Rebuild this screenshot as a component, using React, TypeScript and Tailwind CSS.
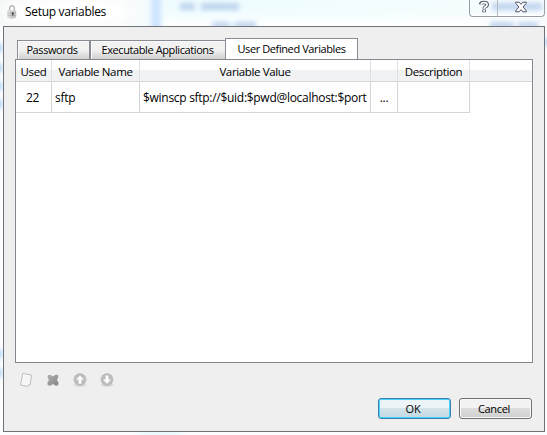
import React from "react";

const font = "font-['Open_Sans','Noto_Sans',sans-serif]";

function Glass() {
  return (
    <svg className="absolute inset-0" width="547" height="435" aria-hidden="true">
      <defs>
        <filter id="soft" x="-50%" y="-100%" width="200%" height="300%">
          <feGaussianBlur stdDeviation="2.4" />
        </filter>
        <filter id="band" x="-100%" y="-50%" width="300%" height="200%">
          <feGaussianBlur stdDeviation="2.5" />
        </filter>
        <filter id="wide" x="-50%" y="-100%" width="200%" height="300%">
          <feGaussianBlur stdDeviation="5" />
        </filter>
        <linearGradient id="sky" x1="0" y1="0" x2="1" y2="0">
          <stop offset="0" stopColor="#f6f7f8" />
          <stop offset="0.22" stopColor="#fbfcfc" />
          <stop offset="0.32" stopColor="#eefcff" />
          <stop offset="0.7" stopColor="#f2fdfe" />
          <stop offset="1" stopColor="#f8fcff" />
        </linearGradient>
      </defs>
      <rect width="547" height="435" fill="#fbfdff" />
      <rect width="547" height="26" fill="url(#sky)" />
      <g filter="url(#wide)">
        <ellipse cx="66" cy="12" rx="62" ry="14" fill="#ffffff" />
        <rect x="160" y="18" width="380" height="12" fill="#ffffff" />
        <ellipse cx="160" cy="434" rx="25" ry="2" fill="#c6f3f7" />
      </g>
      <rect x="151" y="-8" width="10" height="44" fill="#cee5ff" filter="url(#band)" />
      <g filter="url(#soft)" fill="#bdd3ee">
        <rect x="180" y="3" width="15" height="7" />
        <rect x="201" y="3" width="38" height="7" />
        <rect x="212" y="22" width="18" height="6" />
        <rect x="234" y="22" width="22" height="6" />
        <rect x="492" y="3" width="50" height="7" />
        <rect x="490" y="22" width="24" height="6" />
        <rect x="518" y="22" width="20" height="6" />
      </g>
      <g filter="url(#soft)" fill="#a6ccf5">
        <rect x="-3" y="44" width="5" height="8" />
        <rect x="-3" y="64" width="5" height="8" />
        <rect x="-3" y="82" width="5" height="8" />
        <rect x="-3" y="100" width="5" height="8" />
        <rect x="-3" y="350" width="5" height="8" />
        <rect x="-3" y="369" width="5" height="8" />
        <rect x="545" y="38" width="5" height="8" />
      </g>
    </svg>
  );
}

function LockIcon() {
  return (
    <svg width="10" height="14" viewBox="0 0 10 14">
      <path d="M2.6 6V3.7C2.6 1.6 3.4.8 4.9.8s2.4.8 2.4 2.9V6" fill="none" stroke="#b8b8b8" strokeWidth="1.5" />
      <path d="M.6 5.6h8.6v6.8c-1.7 1.4-6.9 1.4-8.6 0z" fill="#c6c6c6" />
      <path d="M.6 5.6h2.6v7.6L.6 12.2z" fill="#dedede" />
      <path d="M.6 8.2h8.6M.6 10.6h8.6" stroke="#a5a5a5" strokeWidth=".6" />
      <circle cx="5.8" cy="8.2" r="1" fill="#444" />
      <path d="M5.4 8.2h.8l.3 2.4H5.1z" fill="#444" />
    </svg>
  );
}

function TitleButtons() {
  return (
    <div className="mr-[2px] flex h-[17px] w-[76px] rounded-b-[4px] border border-t-0 border-[#979fa5] shadow-[0_1px_0_#ffffff,inset_0_-1px_0_#ffffff]">
      <div className="flex w-[28px] justify-center border-r border-[#b5bdc3]">
        <svg width="12" height="14" viewBox="0 0 12 14">
          <path d="M2.6 4.4C2.9 2 9.2 1.6 9.2 4.8 9.2 7 6.1 6.5 6.1 8.6M6.1 9.6v2.7" fill="none" stroke="#535666" strokeWidth="3.6" />
          <path d="M3 4.2C3.7 2.2 9.1 2 9.1 4.8 9.1 6.9 6.1 6.5 6.1 8.4M6.1 10.1v1.6" fill="none" stroke="#fff" strokeWidth="1.7" />
        </svg>
      </div>
      <div className="flex flex-1 justify-center pt-px">
        <svg width="12" height="12" viewBox="0 0 12 12">
          <path d="M.7 1.2h3.4L6 3.3l1.9-2.1h3.4v1L8.1 6l3.2 3.8v1H7.9L6 8.7l-1.9 2.1H.7v-1L3.9 6 .7 2.2z" fill="#fff" stroke="#535666" strokeLinejoin="round" />
        </svg>
      </div>
    </div>
  );
}

function NewIcon() {
  return (
    <svg width="14" height="16" viewBox="0 0 14 16">
      <path d="M3.7 1.4 12.6 3l-1.4 9.8-2.4 1.6L1.5 13z" fill="#f6f6f6" stroke="#b9b9b9" strokeWidth=".9" strokeLinejoin="round" />
      <path d="m8.8 14.2.4-2 2-.2z" fill="#ccc" />
    </svg>
  );
}

function DeleteIcon() {
  return (
    <svg width="12" height="12" viewBox="0 0 12 12">
      <defs>
        <linearGradient id="del" x2="1" y2="1">
          <stop stopColor="#b0b0b0" />
          <stop offset="1" stopColor="#858585" />
        </linearGradient>
      </defs>
      <path d="M1.2 1h2.6L6 2.4 8.4.8h2.3l.5.7v2L9.9 6l1.5 2.2v2.4l-.8.8H8.2L6 10.1l-2 1.3H1.3l-.8-.8V8.4L2 6 .7 3.8V1.5z" fill="url(#del)" />
    </svg>
  );
}

function ArrowIcon({ down = false }: { down?: boolean }) {
  return (
    <svg width="14" height="14" viewBox="0 0 14 14">
      <ellipse cx="7" cy="12" rx="6.5" ry="1.8" fill="#dcdcdc" />
      <circle cx="7" cy="6.6" r="6" fill="#bdbdbd" stroke="#aaa" strokeWidth=".5" />
      <path d="M7 2.4 11 6.6H8.4v4.2H5.6V6.6H3z" fill="#fff" transform={down ? "rotate(180 7 6.6)" : undefined} />
    </svg>
  );
}

const columns = [
  { label: "Used", width: "w-[36px]", value: "22", cell: "justify-center pr-[2px]" },
  { label: "Variable Name", width: "w-[88px]", value: "sftp", cell: "pl-[3px]" },
  { label: "Variable Value", width: "w-[231px]", value: "$winscp sftp://$uid:$pwd@localhost:$port", cell: "pl-[3px]" },
  { label: "", width: "w-[27px]", value: "...", cell: "justify-center" },
  { label: "Description", width: "w-[72px]", value: "", cell: "" },
];

const tab = "flex items-center justify-center border border-b-0 border-[#898c95] whitespace-nowrap tracking-[-0.4px]";

export default function App() {
  return (
    <div className={`relative h-[435px] w-[547px] overflow-hidden text-[11px] leading-[14px] tracking-[-0.2px] text-black ${font}`}>
      <Glass />
      <div className="relative flex h-full flex-col">
        <header className="flex h-[26px] shrink-0 items-start">
          <div className="flex h-6 flex-1 items-center pl-[7px]">
            <LockIcon />
            <h1 className="ml-2 text-[12px] tracking-[-0.3px]">Setup variables</h1>
          </div>
          <TitleButtons />
        </header>
        <main className="ml-[3px] flex h-[406px] w-[542px] flex-col border border-[#6f7378] bg-[#efefef] pl-[11px] pt-[11px]">
          <div className="flex h-[21px] items-end pl-[2px]">
            <div className={`${tab} h-[19px] w-[73px] bg-linear-to-b from-[#f2f2f2] from-50% to-[#d5d5d5] to-90% pr-[3px] shadow-[inset_1px_1px_0_#fafafa]`}>Passwords</div>
            <div className={`${tab} h-[19px] w-[136px] bg-linear-to-b from-[#f2f2f2] from-50% to-[#d5d5d5] to-90% pr-px shadow-[inset_1px_1px_0_#fafafa]`}>Executable Applications</div>
            <div className={`${tab} -ml-px h-[21px] w-[133px] bg-white`}>User Defined Variables</div>
          </div>
          <section className="h-[304px] w-[518px] border border-[#828790] bg-white">
            <div className="flex h-[22px] border-b border-[#d5d5d5] bg-linear-to-b from-white from-45% to-[#f1f2f4] to-50% text-[11.5px] tracking-[-0.36px]">
              {columns.map((c, i) => (
                <div key={i} className={`${c.width} flex shrink-0 items-center justify-center border-r border-[#dfe0e1] pt-[2px] whitespace-nowrap`}>{c.label}</div>
              ))}
            </div>
            <div className="flex h-[31px] text-[12px] tracking-[-0.29px]">
              {columns.map((c, i) => (
                <div key={i} className={`${c.width} ${c.cell} flex shrink-0 items-center border-r border-b border-[#d5d5d5] pt-px whitespace-nowrap`}>{c.value}</div>
              ))}
            </div>
          </section>
          <div className="flex h-[35px] items-center gap-[13px] pb-px pl-[4px]">
            <NewIcon />
            <div className="flex w-[14px] justify-center"><DeleteIcon /></div>
            <ArrowIcon />
            <ArrowIcon down />
          </div>
          <div className="flex justify-end gap-2 pr-[12px]">
            <button className="h-[21px] w-[73px] rounded-[3px] border border-[#3c7fb1] bg-linear-to-b from-[#edf4f7] from-45% via-[#d3e3ea] via-50% to-[#c0d8e3] pr-[3px] shadow-[inset_0_0_0_1px_#46d5f8]">OK</button>
            <button className="h-[21px] w-[73px] rounded-[3px] border border-[#707070] bg-linear-to-b from-[#f2f2f2] from-45% via-[#dddddd] via-50% to-[#cfcfcf] pr-[3px] tracking-[-0.3px] shadow-[inset_0_0_0_1px_#fafafa]">Cancel</button>
          </div>
        </main>
      </div>
    </div>
  );
}
